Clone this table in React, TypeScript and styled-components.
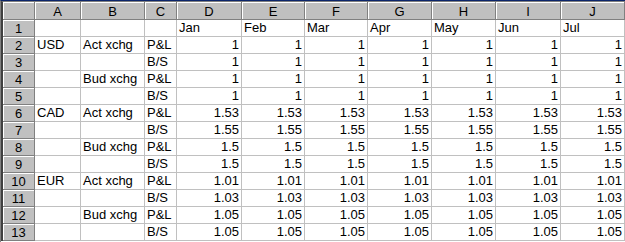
import styled, { createGlobalStyle } from 'styled-components';

const GlobalStyle = createGlobalStyle`
  html, body {
    margin: 0;
    padding: 0;
    background: #ffffff;
  }
`;

const COLS = [46, 64, 32, 65, 63, 63, 64, 64, 65, 64];
const LETTERS = ['A', 'B', 'C', 'D', 'E', 'F', 'G', 'H', 'I', 'J'];
const MONTHS = ['Jan', 'Feb', 'Mar', 'Apr', 'May', 'Jun', 'Jul'];

type Row = { cur?: string; kind?: string; basis: string; value: string };

const ROWS: Row[] = [
  { cur: 'USD', kind: 'Act xchg', basis: 'P&L', value: '1' },
  { basis: 'B/S', value: '1' },
  { kind: 'Bud xchg', basis: 'P&L', value: '1' },
  { basis: 'B/S', value: '1' },
  { cur: 'CAD', kind: 'Act xchg', basis: 'P&L', value: '1.53' },
  { basis: 'B/S', value: '1.55' },
  { kind: 'Bud xchg', basis: 'P&L', value: '1.5' },
  { basis: 'B/S', value: '1.5' },
  { cur: 'EUR', kind: 'Act xchg', basis: 'P&L', value: '1.01' },
  { basis: 'B/S', value: '1.03' },
  { kind: 'Bud xchg', basis: 'P&L', value: '1.05' },
  { basis: 'B/S', value: '1.05' },
];

const Window = styled.div`
  width: 625px;
  height: 242px;
  box-sizing: border-box;
  border-top: 1px solid #0a246a;
  border-left: 1px solid #808080;
  background: #ffffff;
  overflow: hidden;
`;

const Frame = styled.div`
  border-top: 1px solid #808080;
  border-left: 2px solid #404040;
`;

const Sheet = styled.div`
  display: grid;
  grid-template-columns: 32px ${COLS.map((c) => `${c}px`).join(' ')};
  grid-template-rows: 18px repeat(13, 17px);
  font-family: 'Liberation Sans', Arial, sans-serif;
  font-size: 13px;
  color: #000000;
`;

const Header = styled.div`
  box-sizing: border-box;
  background: #c0c0c0;
  border-right: 1px solid #808080;
  border-bottom: 1px solid #808080;
  box-shadow: inset 1px 1px 0 #ffffff;
  display: flex;
  align-items: center;
  justify-content: center;
  font-size: 13px;
  line-height: 1;
  padding-top: 1px;
`;

const Cell = styled.div<{ $num?: boolean }>`
  box-sizing: border-box;
  border-right: 1px solid #c0c0c0;
  border-bottom: 1px solid #c0c0c0;
  display: flex;
  align-items: flex-end;
  justify-content: ${({ $num }) => ($num ? 'flex-end' : 'flex-start')};
  padding: 0 2px 1px 2px;
  line-height: 15px;
  white-space: nowrap;
  overflow: hidden;
`;

export default function App() {
  return (
    <>
      <GlobalStyle />
      <Window>
        <Frame>
          <Sheet>
            <Header />
            {LETTERS.map((l) => (
              <Header key={l}>{l}</Header>
            ))}

            <Header>1</Header>
            <Cell />
            <Cell />
            <Cell />
            {MONTHS.map((m) => (
              <Cell key={m}>{m}</Cell>
            ))}

            {ROWS.map((r, i) => (
              <RowCells key={i} index={i + 2} row={r} />
            ))}
          </Sheet>
        </Frame>
      </Window>
    </>
  );
}

function RowCells({ index, row }: { index: number; row: Row }) {
  return (
    <>
      <Header>{index}</Header>
      <Cell>{row.cur}</Cell>
      <Cell>{row.kind}</Cell>
      <Cell>{row.basis}</Cell>
      {MONTHS.map((m) => (
        <Cell key={m} $num>
          {row.value}
        </Cell>
      ))}
    </>
  );
}
